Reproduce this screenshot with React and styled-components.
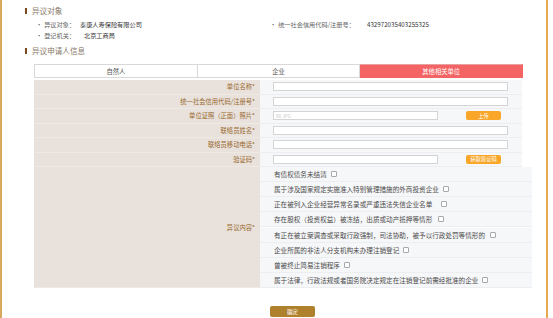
import React from "react";
import styled, { createGlobalStyle } from "styled-components";

const GlobalStyle = createGlobalStyle`
  html, body {
    margin: 0;
    padding: 0;
    background: #ffffff;
  }
  body {
    font-family: "Noto Sans CJK SC", "Noto Sans", sans-serif;
  }
`;

const Frame = styled.div`
  width: 548px;
  height: 318px;
  box-sizing: border-box;
  border-left: 2px solid #d6a95e;
  border-right: 2px solid #e9aa4f;
  padding: 5px 0 0 23px;
  overflow: hidden;
`;

const SectionTitle = styled.div`
  display: flex;
  align-items: center;
  height: 11px;
  font-size: 7.6px;
  color: #8a7a6a;
  margin-top: ${props => props.$top || 0}px;

  &::before {
    content: "";
    width: 2px;
    height: 6px;
    background: #7a4a1e;
    margin-right: 5px;
  }
`;

const InfoRow = styled.div`
  display: flex;
  height: 11px;
  align-items: center;
  padding-left: 11px;
  margin-top: ${props => props.$top || 0}px;
  font-size: 6.2px;
`;

const InfoItem = styled.div`
  display: flex;
  align-items: center;
  width: ${props => props.$width}px;
`;

const InfoLabel = styled.span`
  color: #666;
  width: ${props => props.$width}px;

  &::before {
    content: "•";
    margin-right: 2px;
    color: #555;
  }
`;

const InfoValue = styled.span`
  color: #333;
`;

const Tabs = styled.div`
  display: flex;
  width: 489px;
  margin: 8px 0 0 9px;
`;

const Tab = styled.div`
  flex: 1;
  height: 14px;
  box-sizing: border-box;
  display: flex;
  align-items: center;
  justify-content: center;
  font-size: 6.3px;
  color: ${props => (props.$active ? "#ffffff" : "#555")};
  background: ${props => (props.$active ? "#f46464" : "#ffffff")};
  border: 1px solid ${props => (props.$active ? "#f46464" : "#d8d8d8")};
  border-top-color: ${props => (props.$active ? "#e9a0a0" : "#d8d8d8")};
  & + & {
    border-left: none;
  }
`;

const FormTable = styled.div`
  display: grid;
  grid-template-columns: 226px ${props => props.$right}px;
  margin-left: 9px;
  margin-top: ${props => props.$top || 0}px;
`;

const LabelCell = styled.div`
  background: #e9e2dc;
  border-bottom: 1px solid #efe9e4;
  height: ${props => props.$height || 14.5}px;
  box-sizing: border-box;
  display: flex;
  align-items: center;
  justify-content: flex-end;
  padding-right: 5px;
  font-size: 6.3px;
  color: #98682e;
  grid-row: ${props => props.$span ? `span ${props.$span}` : "auto"};
`;

const FieldCell = styled.div`
  background: #f6f7f9;
  border-bottom: 1px solid #eceef1;
  height: 14.5px;
  box-sizing: border-box;
  display: flex;
  align-items: center;
  padding-left: 13px;
`;

const Input = styled.div`
  width: ${props => props.$width || 235}px;
  height: 9px;
  box-sizing: border-box;
  border: 1px solid #d4d4d4;
  background: #ffffff;
  font-size: 4.5px;
  color: #c8c8c8;
  display: flex;
  align-items: center;
  padding-left: 2px;
`;

const SmallButton = styled.div`
  margin-left: 28px;
  width: 35px;
  height: 9px;
  border-radius: 2px;
  background: #f9a629;
  color: #fff;
  font-size: 5.3px;
  display: flex;
  align-items: center;
  justify-content: center;
`;

const CheckCell = styled.div`
  background: #f6f7f9;
  border-bottom: 1px solid #eceef1;
  height: 15.1px;
  box-sizing: border-box;
  display: flex;
  align-items: center;
  padding-left: 14px;
  font-size: 6.6px;
  color: #4a4a4a;
`;

const Box = styled.span`
  width: 4px;
  height: 4px;
  border: 1px solid #a8a8a8;
  border-radius: 1px;
  background: #fff;
  margin-left: ${props => props.$gap || 4}px;
`;

const Footer = styled.div`
  display: flex;
  padding-left: 245px;
  margin-top: 18px;
`;

const Submit = styled.div`
  width: 45px;
  height: 11px;
  border-radius: 2px;
  background: #b0812d;
  color: #fff;
  font-size: 5.5px;
  display: flex;
  align-items: center;
  justify-content: center;
`;

const fields = [
  { label: "单位名称*" },
  { label: "统一社会信用代码/注册号*" },
  { label: "单位证照（正面）照片*", short: true, button: "上传", placeholder: "XX.JPG" },
  { label: "联络员姓名*" },
  { label: "联络员移动电话*" },
  { label: "验证码*", short: true, button: "获取验证码" },
];

const reasons = [
  { text: "有债权债务未结清", gap: 4 },
  { text: "属于涉及国家规定实施准入特别管理措施的外商投资企业", gap: 4 },
  { text: "正在被列入企业经营异常名录或严重违法失信企业名单", gap: 9 },
  { text: "存在股权（投资权益）被冻结，出质或动产抵押等情形", gap: 6 },
  { text: "有正在被立案调查或采取行政强制，司法协助，被予以行政处罚等情形的", gap: 5 },
  { text: "企业所属的非法人分支机构未办理注销登记", gap: 4 },
  { text: "曾被终止简易注销程序", gap: 4 },
  { text: "属于法律，行政法规或者国务院决定规定在注销登记前需经批准的企业", gap: 4 },
];

export default function App() {
  return (
    <>
      <GlobalStyle />
      <Frame>
        <SectionTitle>异议对象</SectionTitle>
        <InfoRow $top={3}>
          <InfoItem $width={234}>
            <InfoLabel $width={44}>异议对象：</InfoLabel>
            <InfoValue>泰康人寿保险有限公司</InfoValue>
          </InfoItem>
          <InfoItem>
            <InfoLabel $width={97}>统一社会信用代码/注册号：</InfoLabel>
            <InfoValue>432972035403255325</InfoValue>
          </InfoItem>
        </InfoRow>
        <InfoRow>
          <InfoItem $width={234}>
            <InfoLabel $width={48}>登记机关：</InfoLabel>
            <InfoValue>北京工商局</InfoValue>
          </InfoItem>
        </InfoRow>
        <SectionTitle $top={4}>异议申请人信息</SectionTitle>

        <Tabs>
          <Tab>自然人</Tab>
          <Tab>企业</Tab>
          <Tab $active>其他相关单位</Tab>
        </Tabs>

        <FormTable $right={262} $top={2}>
          {fields.map(f => (
            <React.Fragment key={f.label}>
              <LabelCell>{f.label}</LabelCell>
              <FieldCell>
                <Input $width={f.short ? 165 : 235}>{f.placeholder}</Input>
                {f.button && <SmallButton>{f.button}</SmallButton>}
              </FieldCell>
            </React.Fragment>
          ))}
        </FormTable>

        <FormTable $right={272}>
          <LabelCell $span={reasons.length} $height={121}>异议内容*</LabelCell>
          {reasons.map(r => (
            <CheckCell key={r.text}>
              {r.text}
              <Box $gap={r.gap} />
            </CheckCell>
          ))}
        </FormTable>

        <Footer>
          <Submit>确定</Submit>
        </Footer>
      </Frame>
    </>
  );
}
